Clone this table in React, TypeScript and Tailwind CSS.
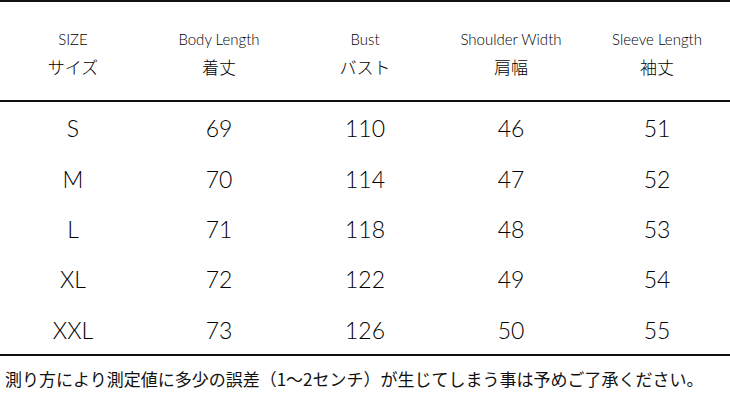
import React from "react";

const headers = [
  { en: "SIZE", ja: "サイズ" },
  { en: "Body Length", ja: "着丈" },
  { en: "Bust", ja: "バスト" },
  { en: "Shoulder Width", ja: "肩幅" },
  { en: "Sleeve Length", ja: "袖丈" },
];

const rows = [
  ["S", "69", "110", "46", "51"],
  ["M", "70", "114", "47", "52"],
  ["L", "71", "118", "48", "53"],
  ["XL", "72", "122", "49", "54"],
  ["XXL", "73", "126", "50", "55"],
];

export default function App() {
  return (
    <div className="w-[730px] h-[400px] bg-white text-[#1a1a1a] font-['Lato','Noto_Sans_CJK_JP',sans-serif] flex flex-col">
      <div className="border-t-2 border-[#111]" />
      {/* header */}
      <div className="grid grid-cols-5 h-[100px] border-b-2 border-[#111] pt-[5px]">
        {headers.map((h) => (
          <div key={h.en} className="flex flex-col items-center justify-center gap-[11px]">
            <span className="text-[15px] leading-none font-light text-black">{h.en}</span>
            <span className="text-[17px] leading-none font-light text-black font-['Noto_Sans_CJK_JP',sans-serif]">{h.ja}</span>
          </div>
        ))}
      </div>
      {/* body */}
      <div className="h-[254px] flex flex-col border-b-2 border-[#111]">
        {rows.map((r) => (
          <div key={r[0]} className="flex-1 grid grid-cols-5 items-center">
            {r.map((c, i) => (
              <span key={i} className="text-center text-[23px] leading-none font-light text-black pt-[3px]">
                {c}
              </span>
            ))}
          </div>
        ))}
      </div>
      {/* note */}
      <div className="pl-[5px] pt-[14px] text-[17px] leading-none font-['Noto_Sans_CJK_JP',sans-serif] text-[#111]">
        測り方により測定値に多少の誤差（1～2センチ）が生じてしまう事は予めご了承ください。
      </div>
    </div>
  );
}
